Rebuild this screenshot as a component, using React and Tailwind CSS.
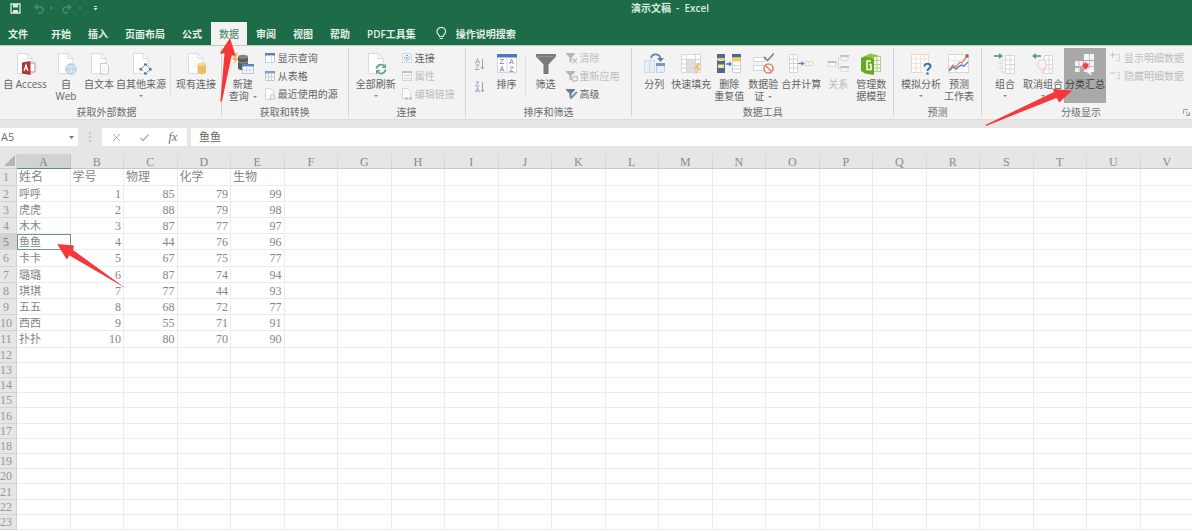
import React from "react";

const SANS = "font-['Open_Sans','Noto_Sans_CJK_SC',sans-serif]";
const SERIF = "font-['Liberation_Serif','Noto_Sans_CJK_SC',serif]";

const COLUMNS = "ABCDEFGHIJKLMNOPQRSTUV".split("");
const HEADINGS = ["姓名", "学号", "物理", "化学", "生物"];
const RECORDS = [
  ["呼呼", 1, 85, 79, 99],
  ["虎虎", 2, 88, 79, 98],
  ["木木", 3, 87, 77, 97],
  ["鱼鱼", 4, 44, 76, 96],
  ["卡卡", 5, 67, 75, 77],
  ["璐璐", 6, 87, 74, 94],
  ["琪琪", 7, 77, 44, 93],
  ["五五", 8, 68, 72, 77],
  ["西西", 9, 55, 71, 91],
  ["扑扑", 10, 80, 70, 90],
];
const ROW_COUNT = 23;
const SELECTED_ROW = 5;

function rowHeight(n) {
  if (n === 1 || n === 6 || n === 11) return "h-[17px]";
  if (n < 12 || n === 16 || n === 21) return "h-[16px]";
  return "h-[15px]";
}

function Icon({ children, size = 22, className = "" }) {
  return (
    <svg aria-hidden="true" width={size} height={size} viewBox={`0 0 ${size} ${size}`} fill="none" className={`shrink-0 ${className}`}>
      {children}
    </svg>
  );
}

function WideIcon({ children }) {
  return (
    <svg aria-hidden="true" width="24" height="22" viewBox="0 0 24 22" fill="none" className="shrink-0">
      {children}
    </svg>
  );
}

function Page() {
  return (
    <>
      <path d="M3.500.5H13l5 5V20.500H3.500z" fill="#fff" stroke="#dadadd" />
      <path d="M13 .5v5h5" stroke="#dadadd" />
    </>
  );
}

function Caret({ className = "" }) {
  return (
    <svg aria-hidden="true" width="4" height="2" viewBox="0 0 4 2" className={`inline-block align-middle ${className}`}>
      <path d="M0 0h4L2 2z" fill="#888" />
    </svg>
  );
}

const AccessIcon = () => (
  <Icon>
    <Page />
    <path d="M15 10h6v9h-6z" fill="#fff" stroke="#c98a88" />
    <path d="M8 9.500l8.500-1.500v14L8 20.500z" fill="#a93734" />
    <path d="M10 18l2-6 2 6M10.700 16h2.600" stroke="#fff" strokeWidth="1.200" />
  </Icon>
);
const WebIcon = () => (
  <Icon>
    <Page />
    <circle cx="16" cy="16" r="5.200" fill="#dfeaf6" stroke="#a9c3e0" />
    <path d="M11 16h10M16 11c-3 3-3 7 0 10M16 11c3 3 3 7 0 10" stroke="#a9c3e0" strokeWidth=".8" />
  </Icon>
);
const TextIcon = () => (
  <Icon>
    <Page />
    <path d="M12.500 10.500h6l2 2v8.500h-8z" fill="#fff" stroke="#c6cacf" />
    <path d="M14.500 14h4M14.500 16h4M14.500 18h4" stroke="#e6e6e6" />
  </Icon>
);
const SourcesIcon = () => (
  <Icon>
    <Page />
    <path d="M15.500 11.500l4.500 4.500-4.500 4.500L11 16z" fill="#f8fafd" stroke="#6d92ca" strokeDasharray="3 1" />
    <path d="M14 10.500h3v2h-3zM14 19.500h3v2h-3zM9.500 15h2.500v2.500H9.500zM19 15h2.500v2.500H19z" fill="#4d78b8" />
  </Icon>
);
const ConnectionsIcon = () => (
  <Icon>
    <Page />
    <path d="M5.500 5h6M5.500 8h10M5.500 11h7M5.500 14h6" stroke="#ececec" />
    <path d="M12.500 11v8c0 3 8.500 3 8.500 0v-8z" fill="#edbd68" />
    <ellipse cx="16.750" cy="11" rx="4.250" ry="1.800" fill="#f8d898" />
  </Icon>
);
const NewQueryIcon = () => (
  <Icon>
    <path d="M4 0L0 7h3L1 12l6-7H4l2-5z" fill="#efb765" />
    <path d="M6 4v11c0 3 10 3 10 0V4z" fill="#5b5e61" />
    <ellipse cx="11" cy="3.800" rx="5" ry="2" fill="#828588" />
    <path d="M6 8.500c2 2 8 2 10 0" stroke="#9a9da0" />
    <path d="M10.500 11.500h11v9h-11z" fill="#fff" stroke="#b3c2d8" />
    <path d="M10 11h12v2.500H10z" fill="#5b84be" />
    <path d="M14.500 13.500v7M18 13.500v7M10.500 17h11" stroke="#c8d3e2" />
  </Icon>
);
const RefreshIcon = () => (
  <Icon>
    <Page />
    <circle cx="16" cy="16" r="6" fill="#f3f3f3" />
    <path d="M11.500 15.500a4.500 4.500 0 018-2M20.500 16.500a4.500 4.500 0 01-8 2.300" stroke="#6ba588" strokeWidth="1.800" />
    <path d="M21 10.500v4.500h-4.500zM11 21.500V17h4.500z" fill="#6ba588" />
  </Icon>
);
const SortIcon = () => (
  <Icon>
    <path d="M1.500 2.500h19v17h-19z" fill="#fff" stroke="#d0d5de" />
    <path d="M1 1h20v3.500H1z" fill="#4a7cbb" />
    <path d="M11 4.500v15" stroke="#d0d5de" />
    <path d="M13.500 11l2-5 2 5M14.200 9.500h2.600M4 18.500l2-5 2 5M4.700 17h2.600" stroke="#8299c4" />
    <path d="M4 6.500h3.500L4 10.500h4M13.700 14h3.500l-3.500 4.500h4" stroke="#a78cb5" />
  </Icon>
);
const FilterIcon = () => (
  <Icon>
    <path d="M1 1h20v2.500l-7.500 8V21h-5v-9.500L1 3.500z" fill="#7a7a7a" />
    <path d="M3 3.500h16" stroke="#959595" />
  </Icon>
);
const ColumnsIcon = () => (
  <Icon>
    <path d="M1.500 7.500h10v12h-10z" fill="#e6effb" stroke="#cddaec" />
    <path d="M6.500 7.500v12" stroke="#cddaec" />
    <path d="M13.500 10.500h8v9h-8z" fill="#e6effb" stroke="#c3d0e4" />
    <path d="M13 10h9v3h-9z" fill="#8495b0" />
    <path d="M8 5c1-5 9-5 9.500 1" stroke="#5580bb" strokeWidth="1.700" />
    <path d="M14 5h7l-3.500 4z" fill="#5580bb" />
  </Icon>
);
const FlashIcon = () => (
  <Icon>
    <path d="M1.500 1.500h19v18h-19z" fill="#fff" stroke="#d8d8d8" />
    <path d="M7 7h9v12H7z" fill="#e0e0e0" />
    <path d="M1.500 6.500h19M1.500 11h19M1.500 15h19M6.500 1.500v18M15.500 1.500v18" stroke="#d6d6d6" />
    <path d="M17 10l-3 6h3l-2 6 6-7h-3l3-5z" fill="#f2c07a" />
  </Icon>
);
const DuplicatesIcon = () => (
  <WideIcon>
    <path d="M.5 1.500h7v18h-7z" fill="#f5e29a" stroke="#5c6f8b" />
    <path d="M0 1h8v4H0zM0 8h8v3.500H0zM0 15h8v5H0z" fill="#4a6898" />
    <path d="M0 5h8v2H0z" fill="#efcf62" />
    <path d="M15.500 1.500h8v18h-8z" fill="#fff" stroke="#cdd1d7" />
    <path d="M15 1h9v3.500h-9z" fill="#4a6898" />
    <path d="M15 4.500h9v4h-9z" fill="#efcf62" />
    <path d="M15.500 12.500h8M15.500 16h8" stroke="#cdd1d7" />
    <path d="M9 11h4" stroke="#4a78b8" strokeWidth="1.500" />
    <path d="M12 8.500l3 2.500-3 2.500z" fill="#4a78b8" />
  </WideIcon>
);
const ValidationIcon = () => (
  <Icon>
    <path d="M1.500 4.500h11v4h-11zM1.500 12.500h11v5h-11z" fill="#fff" stroke="#d6d6d6" />
    <path d="M12 4l3.500 3.500L22 .5" stroke="#6b9a85" strokeWidth="1.800" />
    <circle cx="16.500" cy="15.500" r="4.500" fill="#fff" stroke="#e08468" strokeWidth="1.600" />
    <path d="M13.500 12.500l6 6" stroke="#e08468" strokeWidth="1.600" />
  </Icon>
);
const ConsolidateIcon = () => (
  <WideIcon>
    <path d="M.5 1.500h8v18h-8z" fill="#fff" stroke="#d2d5da" />
    <path d="M.5 6h8M.5 10.500h8M.5 15h8M4.500 1.500v18" stroke="#d2d5da" />
    <path d="M9 10.500h5" stroke="#5b84be" strokeWidth="1.200" />
    <path d="M12.500 8l3 2.500-3 2.500z" fill="#5b84be" />
    <path d="M16.500 8.500h7v4h-7z" fill="#fff" stroke="#f3cbc2" />
    <path d="M20 8.500v4" stroke="#f3cbc2" />
  </WideIcon>
);
const RelationIcon = () => (
  <Icon>
    <path d="M1 8.500h8v5H1zM14 2.500h7v5h-7zM14 13.500h7v5h-7z" fill="#f5f5f5" stroke="#dcdcdc" />
    <path d="M1 8h8.500v2H1zM13.500 2H22v2h-8.500zM13.500 13H22v2h-8.500z" fill="#c0c0c0" />
    <path d="M9 11h2.500V5H14M11.500 11v5H14" stroke="#d6d6d6" />
  </Icon>
);
const ModelIcon = () => (
  <Icon>
    <path d="M12 3.500h8.500v15H12z" fill="#f5f9ef" stroke="#b2d388" />
    <path d="M13 7.500h8M13 11.500h8M13 15h8M17 3v16" stroke="#b2d388" />
    <path d="M1 5l9-4.500 9 2L10 6z" fill="#8fc641" />
    <path d="M1 5l4-1.500 9 2V22L5 20.500 1 18z" fill="#6aa823" />
    <path d="M11 8H7v8.500h4v-5H9" stroke="#fff" strokeWidth="1.500" />
  </Icon>
);
const WhatIfIcon = () => (
  <Icon>
    <path d="M1.500 1.500h17v18h-17z" fill="#fff" stroke="#f1d5bc" />
    <path d="M1.500 6h17M1.500 10.500h17M1.500 15h17M6 1.500v18M10.500 1.500v18M14.500 1.500v18" stroke="#f2dfcf" />
    <path d="M13 10h8v12h-8z" fill="#f3f3f3" />
    <path d="M14.500 13.500c0-4 6-3.500 6-.3 0 2-3 2.300-3 4.800" stroke="#3f74a8" strokeWidth="2" />
    <circle cx="17.500" cy="20.500" r="1.300" fill="#3f74a8" />
  </Icon>
);
const ForecastIcon = () => (
  <Icon>
    <path d="M.5 1.500h20v18H.5z" fill="#fff" stroke="#d6d6d6" />
    <path d="M.5 7.500h20M.5 13.500h20M7 1.500v18M14 1.500v18" stroke="#e4e4e4" />
    <path d="M1 18l4-4 3 2 5-4 3 1 4-4" stroke="#5b84be" strokeWidth="1.500" />
    <path d="M1 17l4-5 3 2 4-5 2 1 5-7" stroke="#d28468" strokeWidth="1.300" />
    <circle cx="19" cy="3" r="1.700" fill="#a8563f" />
  </Icon>
);
const GroupIcon = () => (
  <Icon>
    <path d="M11.500 2.500h9v18h-9z" fill="#fff" stroke="#d6d6d6" />
    <path d="M11.500 7h9M11.500 11.500h9M11.500 16h9M16 2.500v18" stroke="#d6d6d6" />
    <path d="M8 6v13h3M5 10h3M5 15h3" stroke="#d0d0d0" strokeDasharray="2 1" />
    <path d="M0 3h6" stroke="#5f9a79" strokeWidth="1.700" />
    <path d="M5 0l4 3-4 3z" fill="#5f9a79" />
  </Icon>
);
const UngroupIcon = () => (
  <Icon>
    <path d="M12.500 2.500h8v18h-8z" fill="#fff" stroke="#dbd6d6" />
    <path d="M12.500 7h8M12.500 11.500h8M12.500 16h8M17 2.500v18" stroke="#dbd6d6" />
    <path d="M6 8.500l4-2 4 2v6l-4 2-4-2zM10 16.500V20h3" stroke="#f0c8c3" fill="#fbf3f2" />
    <path d="M3 3h6" stroke="#5f9a79" strokeWidth="1.700" />
    <path d="M4 0L0 3l4 3z" fill="#5f9a79" />
  </Icon>
);
const SubtotalIcon = () => (
  <Icon>
    <path d="M1 8h8v5H1zM1 15h5v4H1zM10 1h10v6H10zM10 8h10v11H10z" fill="#f4f4f4" />
    <path d="M15.500 1v18M10 13.500h10M5 8v11" stroke="#c4c4c4" />
    <circle cx="11.500" cy="13" r="3.400" fill="#e2483f" stroke="#f6b4b0" />
    <path d="M13.500 14l5.500 5-2.500.2 1.300 2.500-1.600.3-1.200-2.300-1.500 1.300z" fill="#fff" />
  </Icon>
);

const ShowQueryIcon = () => (
  <Icon size={12}>
    <path d="M1.500 1.500h9v9h-9z" fill="#fff" stroke="#c4cedd" />
    <path d="M1 1h10v2.500H1z" fill="#5580bb" />
    <path d="M7.500 3.500v7" stroke="#d3dbe6" />
  </Icon>
);
const FromTableIcon = () => (
  <Icon size={12}>
    <path d="M1.500 1.500h9v9h-9z" fill="#fff" stroke="#b8c5d8" />
    <path d="M1 1h10v2.500H1z" fill="#839dc3" />
    <path d="M4.500 3v7.500M7.500 3v7.500M1.500 7h9" stroke="#c0cbdb" />
  </Icon>
);
const RecentIcon = () => (
  <Icon size={12}>
    <path d="M1.500.5h5l3 3v8h-8z" fill="#fff" stroke="#d3d3d3" />
    <circle cx="8.500" cy="9" r="2.500" fill="#eee" stroke="#c6c6c6" />
  </Icon>
);
const LinkIcon = () => (
  <Icon size={12}>
    <path d="M1.500 1.500h9v9h-9z" fill="#f4f8fd" stroke="#d0d9e6" />
    <path d="M6 3l3 3-3 3-3-3z" stroke="#7395c9" strokeDasharray="2 1" />
    <circle cx="6" cy="6" r=".8" fill="#5a83c0" />
  </Icon>
);
const PropertyIcon = () => (
  <Icon size={12}>
    <path d="M1.500 1.500h9v9h-9z" fill="#f7f7f7" stroke="#d3d3d3" />
    <path d="M1 1h10v2H1z" fill="#c0c0c0" />
    <path d="M3 5.500h6M3 8.500h6" stroke="#d3d3d3" />
  </Icon>
);
const EditLinkIcon = () => (
  <Icon size={12}>
    <path d="M1.500.5h5l3 3v7h-8z" fill="#fafafa" stroke="#d6d6d6" />
    <path d="M4 10.500h3M8 10.500h3" stroke="#bcbcbc" strokeWidth="2" />
  </Icon>
);
function FunnelIcon({ color, children }) {
  return (
    <Icon size={12}>
      <path d="M0 1h9v1L5.500 5.500V10h-2V5.500L0 2z" fill={color} />
      {children}
    </Icon>
  );
}
const ClearIcon = () => (
  <FunnelIcon color="#b5b5b5">
    <path d="M6.500 6.500l4.500 4.500M11 6.500L6.500 11" stroke="#c2c2c2" strokeWidth="1.300" />
  </FunnelIcon>
);
const ReapplyIcon = () => (
  <FunnelIcon color="#b5b5b5">
    <path d="M7 6.500h2.500a2 2 0 010 4.500H6.500V7" stroke="#c2c2c2" strokeWidth="1.300" />
  </FunnelIcon>
);
const AdvancedIcon = () => (
  <FunnelIcon color="#6d7f78">
    <path d="M4.500 10.500L11 4" stroke="#6d90c6" strokeWidth="2" />
  </FunnelIcon>
);
function DetailIcon({ minus }) {
  return (
    <Icon size={12}>
      <path d={minus ? "M0 3h5" : "M0 3h5M2.500.5v5"} stroke="#c4c4c4" />
      <path d="M6 2.500h4M8 5.500h2M6 8.500h4M9.500 1v9" stroke="#d8d8d8" />
    </Icon>
  );
}

function SortButton({ label, descending }) {
  return (
    <button type="button" aria-label={label} className="flex h-[23px] w-4 items-center justify-center">
      <Icon size={12}>
        <path d={descending ? "M1.500 11.500l2-5 2 5M2.200 10h2.600" : "M1.500 5.500l2-5 2 5M2.200 4h2.600"} stroke="#93a5cb" />
        <path d={descending ? "M1.500 1H5L1.500 5H5.500" : "M1.500 7H5l-3.500 4.500h4"} stroke="#b29dbd" />
        <path d="M8.500 1v10M7 9l1.500 2L10 9" stroke="#a0a0a0" />
      </Icon>
    </button>
  );
}

function BigButton({ icon: Glyph, lines, width, caret, disabled, active }) {
  const tone = disabled ? "text-[#bdbdbd]" : active ? "bg-[#a9a9a9] text-[#3d3d3d]" : "text-[#636363]";
  return (
    <button type="button" disabled={disabled} className={`flex h-[55px] shrink-0 flex-col items-center gap-[3px] pt-[5px] text-[10px] leading-3 whitespace-nowrap ${width} ${tone}`}>
      <Glyph />
      <span className="flex flex-col items-center">
        {lines.map((line, i) => (
          <span key={line}>
            {line}
            {caret && lines.length > 1 && i === lines.length - 1 && <Caret className="ml-1" />}
          </span>
        ))}
        {caret && lines.length === 1 && (
          <span className="flex h-3 items-center">
            <Caret />
          </span>
        )}
      </span>
    </button>
  );
}

function SmallButtons({ items }) {
  return (
    <div className="flex flex-col pt-px">
      {items.map(({ icon: Glyph, label, disabled, minus }) => (
        <button key={label} type="button" disabled={disabled} className={`flex h-[18px] items-center gap-0.5 text-[10px] leading-3 whitespace-nowrap ${disabled ? "text-[#bdbdbd]" : "text-[#636363]"}`}>
          <Glyph minus={minus} />
          {label}
        </button>
      ))}
    </div>
  );
}

function Group({ label, width, body = "", caption = "", last, children }) {
  return (
    <section aria-label={label} className={`flex flex-col pt-0.5 ${width}`}>
      <div className="flex grow">
        <div className="flex grow flex-col">
          <div className={`flex ${body}`}>{children}</div>
          <div className={`relative pt-[3px] text-center text-[10px] leading-3 text-[#6c6c6c] ${caption}`}>
            {label}
            {last && (
              <button type="button" aria-label="分级显示设置" className="absolute right-0.5 bottom-0.5">
                <Icon size={7}>
                  <path d="M.5 5V.5H5M2.500 2.500l4 4M6.500 3v3.500H3" stroke="#a0a0a0" />
                </Icon>
              </button>
            )}
          </div>
        </div>
        {!last && <span className="mb-0.5 w-px bg-[#d4d4d4]" />}
      </div>
    </section>
  );
}

const Divider = ({ className }) => <span className={`my-1.5 w-px shrink-0 bg-[#dedede] ${className}`} />;

function TitleBar() {
  return (
    <div className="mb-1.5 flex h-4 items-center text-[#d9ebe0]">
      <div className="flex w-[148px] items-center pl-2.5">
        <button type="button" aria-label="保存">
          <Icon size={11}>
            <path d="M1 1h9v9H1z" stroke="currentColor" strokeWidth="1.300" />
            <path d="M3 1h5v3.500H3zM3 7h5v3H3z" fill="currentColor" />
          </Icon>
        </button>
        <button type="button" aria-label="撤消" className="ml-3 flex items-center gap-1.5 text-[#478a6a]">
          <Icon size={11}>
            <path d="M3 4h4a2.800 2.800 0 010 6H5" stroke="currentColor" strokeWidth="1.500" />
            <path d="M5 .5L1 4l4 3.500z" fill="currentColor" />
          </Icon>
          <span className="size-0.5 bg-current" />
        </button>
        <button type="button" aria-label="恢复" className="ml-2.5 flex items-center gap-1.5 text-[#478a6a]">
          <Icon size={11}>
            <path d="M8 4H4a2.800 2.800 0 000 6h2" stroke="currentColor" strokeWidth="1.500" />
            <path d="M6 .5L10 4 6 7.500z" fill="currentColor" />
          </Icon>
          <span className="size-0.5 bg-current" />
        </button>
        <button type="button" aria-label="自定义快速访问工具栏" className="ml-3">
          <Icon size={5}>
            <path d="M1 0h3v1H1zM.5 2h4l-2 2.500z" fill="currentColor" />
          </Icon>
        </button>
      </div>
      <h1 className="grow text-center text-[10px] leading-3 font-semibold whitespace-pre">演示文稿  -  Excel</h1>
    </div>
  );
}

function Tabs() {
  const tabs = ["文件", "开始", "插入", "页面布局", "公式", "数据", "审阅", "视图", "帮助", "PDF工具集"];
  return (
    <nav className="flex h-[23px] gap-px text-[10px] leading-3 font-semibold text-[#e2f0e8]">
      {tabs.map((tab) => (
        <button
          key={tab}
          type="button"
          className={`px-2 whitespace-nowrap ${tab === "文件" ? "mr-1.5" : ""} ${tab === "数据" ? "bg-[#f3f3f3] font-normal text-[#3f7d5e]" : ""}`}
        >
          {tab}
        </button>
      ))}
      <button type="button" className="ml-2.5 flex items-center gap-2 whitespace-nowrap">
        <Icon size={13}>
          <path d="M4.500 9.500C4.500 8 2 7 2 4.700a4.300 4.300 0 018.600 0C10.600 7 8 8 8 9.500zM4.500 11.500H8" stroke="currentColor" strokeWidth="1.200" />
        </Icon>
        操作说明搜索
      </button>
    </nav>
  );
}

function Ribbon() {
  return (
    <div className="flex h-[73px] overflow-hidden bg-[#f3f3f3]">
      <Group label="获取外部数据" width="w-[222px]" caption="pr-2">
        <BigButton icon={AccessIcon} lines={["自 Access"]} width="w-[50px]" />
        <BigButton icon={WebIcon} lines={["自", "Web"]} width="w-[32px]" />
        <BigButton icon={TextIcon} lines={["自文本"]} width="w-[34px]" />
        <BigButton icon={SourcesIcon} lines={["自其他来源"]} width="w-[50px]" caret />
        <Divider className="mx-1" />
        <BigButton icon={ConnectionsIcon} lines={["现有连接"]} width="w-[42px]" />
      </Group>
      <Group label="获取和转换" width="w-[127px]">
        <BigButton icon={NewQueryIcon} lines={["新建", "查询"]} width="w-[42px]" caret />
        <SmallButtons
          items={[
            { icon: ShowQueryIcon, label: "显示查询" },
            { icon: FromTableIcon, label: "从表格" },
            { icon: RecentIcon, label: "最近使用的源" },
          ]}
        />
      </Group>
      <Group label="连接" width="w-[117px]" body="pl-[6px]">
        <BigButton icon={RefreshIcon} lines={["全部刷新"]} width="w-[42px]" caret />
        <div className="pl-1">
          <SmallButtons
            items={[
              { icon: LinkIcon, label: "连接" },
              { icon: PropertyIcon, label: "属性", disabled: true },
              { icon: EditLinkIcon, label: "编辑链接", disabled: true },
            ]}
          />
        </div>
      </Group>
      <Group label="排序和筛选" width="w-[167px]" body="pl-[6px]">
        <div className="flex flex-col pt-1">
          <SortButton label="升序" />
          <SortButton label="降序" descending />
        </div>
        <div className="pl-[3px]">
          <BigButton icon={SortIcon} lines={["排序"]} width="w-[32px]" />
        </div>
        <Divider className="mx-0.5" />
        <BigButton icon={FilterIcon} lines={["筛选"]} width="w-[36px]" />
        <div className="pl-0.5">
          <SmallButtons
            items={[
              { icon: ClearIcon, label: "清除", disabled: true },
              { icon: ReapplyIcon, label: "重新应用", disabled: true },
              { icon: AdvancedIcon, label: "高级" },
            ]}
          />
        </div>
      </Group>
      <Group label="数据工具" width="w-[262px]" body="pl-[6px]">
        <BigButton icon={ColumnsIcon} lines={["分列"]} width="w-[32px]" />
        <BigButton icon={FlashIcon} lines={["快速填充"]} width="w-[42px]" />
        <BigButton icon={DuplicatesIcon} lines={["删除", "重复值"]} width="w-[34px]" />
        <BigButton icon={ValidationIcon} lines={["数据验", "证"]} width="w-[34px]" caret />
        <BigButton icon={ConsolidateIcon} lines={["合并计算"]} width="w-[42px]" />
        <BigButton icon={RelationIcon} lines={["关系"]} width="w-[32px]" disabled />
        <BigButton icon={ModelIcon} lines={["管理数", "据模型"]} width="w-[34px]" />
      </Group>
      <Group label="预测" width="w-[88px]" body="pl-[6px]">
        <BigButton icon={WhatIfIcon} lines={["模拟分析"]} width="w-[42px]" caret />
        <BigButton icon={ForecastIcon} lines={["预测", "工作表"]} width="w-[34px]" />
      </Group>
      <Group label="分级显示" width="min-w-[210px] grow" body="pl-[6px]" caption="pr-3" last>
        <BigButton icon={GroupIcon} lines={["组合"]} width="w-[34px]" caret />
        <BigButton icon={UngroupIcon} lines={["取消组合"]} width="w-[42px]" caret />
        <BigButton icon={SubtotalIcon} lines={["分类汇总"]} width="w-[42px]" active />
        <div className="pl-1">
          <SmallButtons
            items={[
              { icon: DetailIcon, label: "显示明细数据", disabled: true },
              { icon: DetailIcon, label: "隐藏明细数据", disabled: true, minus: true },
            ]}
          />
        </div>
      </Group>
    </div>
  );
}

function FormulaBar() {
  return (
    <div className="border-t border-[#dcdcdc] bg-[#e6e6e6] pt-2 pb-2">
      <div className="flex h-[18px] items-stretch">
        <div className="flex w-[78px] items-center bg-white pr-1">
          <input aria-label="名称框" defaultValue="A5" className="w-full min-w-0 bg-transparent pl-px text-[11px] leading-3 text-[#6c6c6c] outline-none" />
          <button type="button" aria-label="展开名称框">
            <Icon size={5}>
              <path d="M0 1h5L2.500 4z" fill="#777" />
            </Icon>
          </button>
        </div>
        <span className="flex w-6 flex-col items-center justify-center gap-0.5">
          <i className="size-0.5 bg-[#c6c6c6]" />
          <i className="size-0.5 bg-[#c6c6c6]" />
          <i className="size-0.5 bg-[#c6c6c6]" />
        </span>
        <div className="flex w-[85px] items-center justify-around bg-white text-[#b0b0b0]">
          <button type="button" aria-label="取消">
            <Icon size={9}>
              <path d="M1 1l7 7M8 1L1 8" stroke="currentColor" />
            </Icon>
          </button>
          <button type="button" aria-label="输入">
            <Icon size={9}>
              <path d="M.5 5L3 7.500l5.500-6" stroke="currentColor" strokeWidth="1.300" />
            </Icon>
          </button>
          <button type="button" aria-label="插入函数" className="font-['Liberation_Serif',serif] text-[12px] leading-3 text-[#6c6c6c] italic">
            fx
          </button>
        </div>
        <input aria-label="编辑栏" defaultValue="鱼鱼" className="ml-1 min-w-0 grow bg-white pl-2 text-[11px] leading-4 text-[#636363] outline-none" />
      </div>
    </div>
  );
}

function Sheet() {
  const rows = Array.from({ length: ROW_COUNT }, (_, i) => i + 1);
  return (
    <table className={`w-[calc(100%+2px)] table-fixed border-separate border-spacing-0 text-[12px] leading-[13px] text-[#858585] ${SERIF}`}>
      <thead>
        <tr>
          <th className="h-[15px] w-[17px] border-r border-b border-[#cfcfcf] bg-[#e6e6e6] p-0">
            <svg aria-hidden="true" width="12" height="12" viewBox="0 0 12 12" className="ml-auto">
              <path d="M11 0v11H0z" fill="#b5b5b5" />
            </svg>
          </th>
          {COLUMNS.map((c) => (
            <th key={c} scope="col" className={`border-r border-b p-0 pt-0.5 leading-3 font-normal ${c === "A" ? "border-r-[#c4c4c4] border-b-[#5f9077] bg-[#d2d2d2] text-[#6f8a7c]" : "border-r-[#d8d8d8] border-b-[#c9c9c9] bg-[#e6e6e6] text-[#8a8a8a]"}`}>
              {c}
            </th>
          ))}
        </tr>
      </thead>
      <tbody>
        {rows.map((n) => {
          const values = n === 1 ? HEADINGS : RECORDS[n - 2] || [];
          const picked = n === SELECTED_ROW;
          return (
            <tr key={n}>
              <th scope="row" className={`border-r border-b border-[#d2d2d2] p-0 pt-px pr-1 font-normal ${rowHeight(n)} ${picked ? "bg-[#d2d2d2] text-[#6f8a7c]" : "bg-[#e6e6e6] text-[#969696]"}`}>
                <span className="flex justify-center">{n}</span>
              </th>
              {COLUMNS.map((c, i) => {
                const value = values[i];
                const number = typeof value === "number";
                const selected = picked && i === 0;
                return (
                  <td
                    key={c}
                    className={`border-r border-b border-[#ececec] bg-white p-0 pt-px whitespace-nowrap ${number ? "pr-0.5 text-right" : "pl-0.5"} ${!number && n > 1 ? "text-[11px]" : ""} ${selected ? "outline -outline-offset-1 outline-[#6c9882]" : ""}`}
                  >
                    {value}
                  </td>
                );
              })}
            </tr>
          );
        })}
      </tbody>
    </table>
  );
}

function Arrows() {
  return (
    <svg aria-hidden="true" width="1192" height="300" viewBox="0 0 1192 300" className="pointer-events-none absolute top-0 left-0" fill="#f5383a">
      <path d="M230 38L235.700 55.700 231.700 55.500 222 101 220.300 102 224.500 53.500 219.800 53.500z" />
      <path d="M57.300 244L74 245.500 73 250 125.700 288.300 69.500 255.500 66.700 259.500z" />
      <path d="M1072 90.700L1059.300 102.500 1056.500 98 986 126 985.300 125 1054 92 1053 88.800z" />
    </svg>
  );
}

export default function App() {
  return (
    <div className={`relative min-h-screen overflow-hidden bg-white ${SANS}`}>
      <header className="border-b border-[#b9cfc3] bg-[#1d6b47]">
        <TitleBar />
        <Tabs />
      </header>
      <Ribbon />
      <FormulaBar />
      <Sheet />
      <Arrows />
    </div>
  );
}
